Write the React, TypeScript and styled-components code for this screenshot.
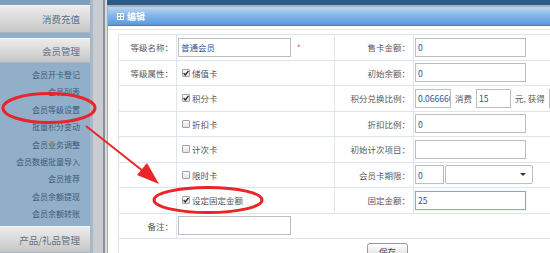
import styled, { createGlobalStyle } from "styled-components";

const Global = createGlobalStyle`
  html, body { margin: 0; padding: 0; background: #fff; }
  body { font-family: "Noto Sans CJK SC", "Noto Sans", sans-serif; }
`;

const Page = styled.div`
  position: relative;
  display: flex;
  width: 550px;
  height: 253px;
  overflow: hidden;
`;

const Sidebar = styled.div`
  width: 90px;
  flex-shrink: 0;
  display: flex;
  flex-direction: column;
  background: #91afc9;
`;
const SideTop = styled.div`
  height: 5px;
  background: #7f9fbc;
`;
const MenuHead = styled.div<{ $h: number; $mt?: number }>`
  height: ${(p) => p.$h}px;
  margin-top: ${(p) => p.$mt || 0}px;
  flex-shrink: 0;
  display: flex;
  align-items: center;
  justify-content: flex-end;
  padding-right: 10px;
  font-size: 9.5px;
  color: #5f7185;
  background: linear-gradient(#ececec, #d6d6d6 60%, #c6c6c6);
  border-top: 1px solid #f6f6f6;
  border-bottom: 1px solid #a9b6c2;
  box-sizing: border-box;
`;
const SubList = styled.div`
  flex: 1;
  display: flex;
  flex-direction: column;
  padding-top: 3px;
  padding-right: 10px;
`;
const SubItem = styled.div`
  height: 17.4px;
  line-height: 17.4px;
  text-align: right;
  font-size: 8px;
  color: #3d5b7b;
  white-space: nowrap;
`;

const Splitter = styled.div`
  width: 17px;
  flex-shrink: 0;
  background: linear-gradient(90deg, #a9b8c6 0 3px, #c9ccd0 3px 13px, #8c9196 13px 15px, #d8dadc 15px);
`;

const Main = styled.div`
  flex: 1;
  display: flex;
  flex-direction: column;
  min-width: 0;
`;
const TopStrip = styled.div`
  height: 5px;
  background: #2c5b87;
  border-bottom: 2px solid #a9b0b8;
  flex-shrink: 0;
`;
const Panel = styled.div`
  flex: 1;
  display: flex;
  flex-direction: column;
  border-left: 1px solid #8fb0d6;
  background: #fff;
`;
const PanelHead = styled.div`
  height: 18px;
  flex-shrink: 0;
  display: flex;
  align-items: center;
  gap: 3px;
  padding-left: 9px;
  color: #fff;
  font-size: 9px;
  font-weight: bold;
  background: linear-gradient(#b9d7f4, #86b8ea 45%, #5b98da);
  border-bottom: 1px solid #3c7bc6;
`;
const HeadIcon = styled.span`
  width: 5px;
  height: 5px;
  border: 1px solid #fff;
  position: relative;
  &::before {
    content: "";
    position: absolute;
    left: 2px;
    top: 0;
    width: 1px;
    height: 5px;
    background: #fff;
  }
  &::after {
    content: "";
    position: absolute;
    top: 2px;
    left: 0;
    height: 1px;
    width: 5px;
    background: #fff;
  }
`;
const PanelBody = styled.div`
  margin-top: 3px;
  border-top: 1px solid #e2e9ef;
  padding: 4px 0 0 10px;
`;

const Table = styled.div`
  display: grid;
  grid-template-columns: 58px 158px 79px 230px;
  grid-auto-rows: 25.5px;
  border-left: 1px solid #dce5ed;
  border-top: 1px solid #dce5ed;
  width: 525px;
`;
const Cell = styled.div<{ $span?: number; $label?: boolean }>`
  grid-column: span ${(p) => p.$span || 1};
  border-right: 1px solid #dce5ed;
  border-bottom: 1px solid #dce5ed;
  display: flex;
  align-items: center;
  justify-content: ${(p) => (p.$label ? "flex-end" : "flex-start")};
  padding: ${(p) => (p.$label ? "0 3px 0 0" : "0 0 0 1px")};
  font-size: 8.5px;
  color: #5a5a5a;
  white-space: nowrap;
  gap: 4px;
`;
const ButtonCell = styled.div`
  grid-column: span 4;
  padding: 4px 0 0 248px;
`;
const Input = styled.div<{ $w: number; $focus?: boolean }>`
  width: ${(p) => p.$w}px;
  height: 19px;
  box-sizing: border-box;
  border: 1px solid ${(p) => (p.$focus ? "#86a9d3" : "#bdbdbd")};
  box-shadow: ${(p) => (p.$focus ? "0 0 1px #a9c6ea" : "none")};
  font-size: 8.5px;
  color: #2b5596;
  display: flex;
  align-items: center;
  padding-left: 2px;
  overflow: hidden;
  flex-shrink: 0;
`;
const Star = styled.span`
  color: #e03a3a;
  font-size: 8px;
  margin-left: 2px;
`;
const Select = styled(Input)`
  justify-content: flex-end;
  padding-right: 6px;
  border-radius: 2px;
  margin-left: -3px;
`;
const Caret = styled.span`
  width: 0;
  height: 0;
  border-left: 3px solid transparent;
  border-right: 3px solid transparent;
  border-top: 3px solid #333;
`;
const Check = styled.span`
  width: 8px;
  height: 8px;
  box-sizing: border-box;
  border: 1px solid #a2a2a2;
  background: linear-gradient(#fafafa, #e4e4e4);
  display: inline-flex;
  align-items: center;
  justify-content: center;
  margin-left: 4px;
  margin-right: -1px;
  border-radius: 1px;
`;
const Opt = styled.span`
  display: flex;
  align-items: center;
  gap: 3px;
  color: #555;
`;
const Button = styled.div`
  width: 41px;
  height: 16px;
  box-sizing: border-box;
  border: 1px solid #9a9a9a;
  border-radius: 3px;
  background: linear-gradient(#ffffff, #dcdcdc);
  font-size: 8.5px;
  color: #444;
  display: flex;
  align-items: center;
  justify-content: center;
`;
const Overlay = styled.svg`
  position: absolute;
  left: 0;
  top: 0;
  pointer-events: none;
`;

const CheckBox = ({ on, text }: { on?: boolean; text: string }) => (
  <Opt>
    <Check>
      {on && (
        <svg width="6" height="6" viewBox="0 0 6 6">
          <path d="M0.6 3.1 L2.3 4.9 L5.5 0.8" stroke="#222" strokeWidth="1.3" fill="none" />
        </svg>
      )}
    </Check>
    {text}
  </Opt>
);

const subs = [
  "会员开卡登记",
  "会员列表",
  "会员等级设置",
  "批量积分变动",
  "会员业务调整",
  "会员数据批量导入",
  "会员推荐",
  "会员余额提现",
  "会员余额转账",
];

export default function App() {
  return (
    <>
      <Global />
      <Page>
        <Sidebar>
          <SideTop />
          <MenuHead $h={28}>消费充值</MenuHead>
          <MenuHead $h={25} $mt={5}>会员管理</MenuHead>
          <SubList>
            {subs.map((s) => (
              <SubItem key={s}>{s}</SubItem>
            ))}
          </SubList>
          <MenuHead $h={27}>产品/礼品管理</MenuHead>
        </Sidebar>
        <Splitter />
        <Main>
          <TopStrip />
          <Panel>
            <PanelHead>
              <HeadIcon />
              编辑
            </PanelHead>
            <PanelBody>
              <Table>
                <Cell $label>等级名称：</Cell>
                <Cell>
                  <Input $w={113}>普通会员</Input>
                  <Star>*</Star>
                </Cell>
                <Cell $label>售卡金额：</Cell>
                <Cell>
                  <Input $w={111}>0</Input>
                </Cell>

                <Cell $label>等级属性：</Cell>
                <Cell>
                  <CheckBox on text="储值卡" />
                </Cell>
                <Cell $label>初始余额：</Cell>
                <Cell>
                  <Input $w={111}>0</Input>
                </Cell>

                <Cell $label />
                <Cell>
                  <CheckBox on text="积分卡" />
                </Cell>
                <Cell $label>积分兑换比例：</Cell>
                <Cell>
                  <Input $w={36}>0.066666</Input>
                  消费
                  <Input $w={35}>15</Input>
                  元, 获得
                  <Input $w={30}>1</Input>
                </Cell>

                <Cell $label />
                <Cell>
                  <CheckBox text="折扣卡" />
                </Cell>
                <Cell $label>折扣比例：</Cell>
                <Cell>
                  <Input $w={111}>0</Input>
                </Cell>

                <Cell $label />
                <Cell>
                  <CheckBox text="计次卡" />
                </Cell>
                <Cell $label>初始计次项目：</Cell>
                <Cell>
                  <Input $w={111} />
                </Cell>

                <Cell $label />
                <Cell>
                  <CheckBox text="限时卡" />
                </Cell>
                <Cell $label>会员卡期限：</Cell>
                <Cell>
                  <Input $w={29}>0</Input>
                  <Select $w={88}>
                    <Caret />
                  </Select>
                </Cell>

                <Cell $label />
                <Cell>
                  <CheckBox on text="设定固定金额" />
                </Cell>
                <Cell $label>固定金额：</Cell>
                <Cell>
                  <Input $w={111} $focus>
                    25
                  </Input>
                </Cell>

                <Cell $label>备注：</Cell>
                <Cell $span={3}>
                  <Input $w={113} />
                </Cell>

                <ButtonCell>
                  <Button>保存</Button>
                </ButtonCell>
              </Table>
            </PanelBody>
          </Panel>
        </Main>
        <Overlay width="550" height="253" viewBox="0 0 550 253">
          <ellipse cx="49" cy="108" rx="46" ry="14.5" fill="none" stroke="#e8262a" strokeWidth="3" />
          <line x1="86" y1="126" x2="148" y2="175" stroke="#e8262a" strokeWidth="2" />
          <polygon points="159,184 137,175 147,163" fill="#e8262a" />
          <ellipse cx="208" cy="200" rx="54" ry="12.5" fill="none" stroke="#e8262a" strokeWidth="3" />
        </Overlay>
      </Page>
    </>
  );
}
